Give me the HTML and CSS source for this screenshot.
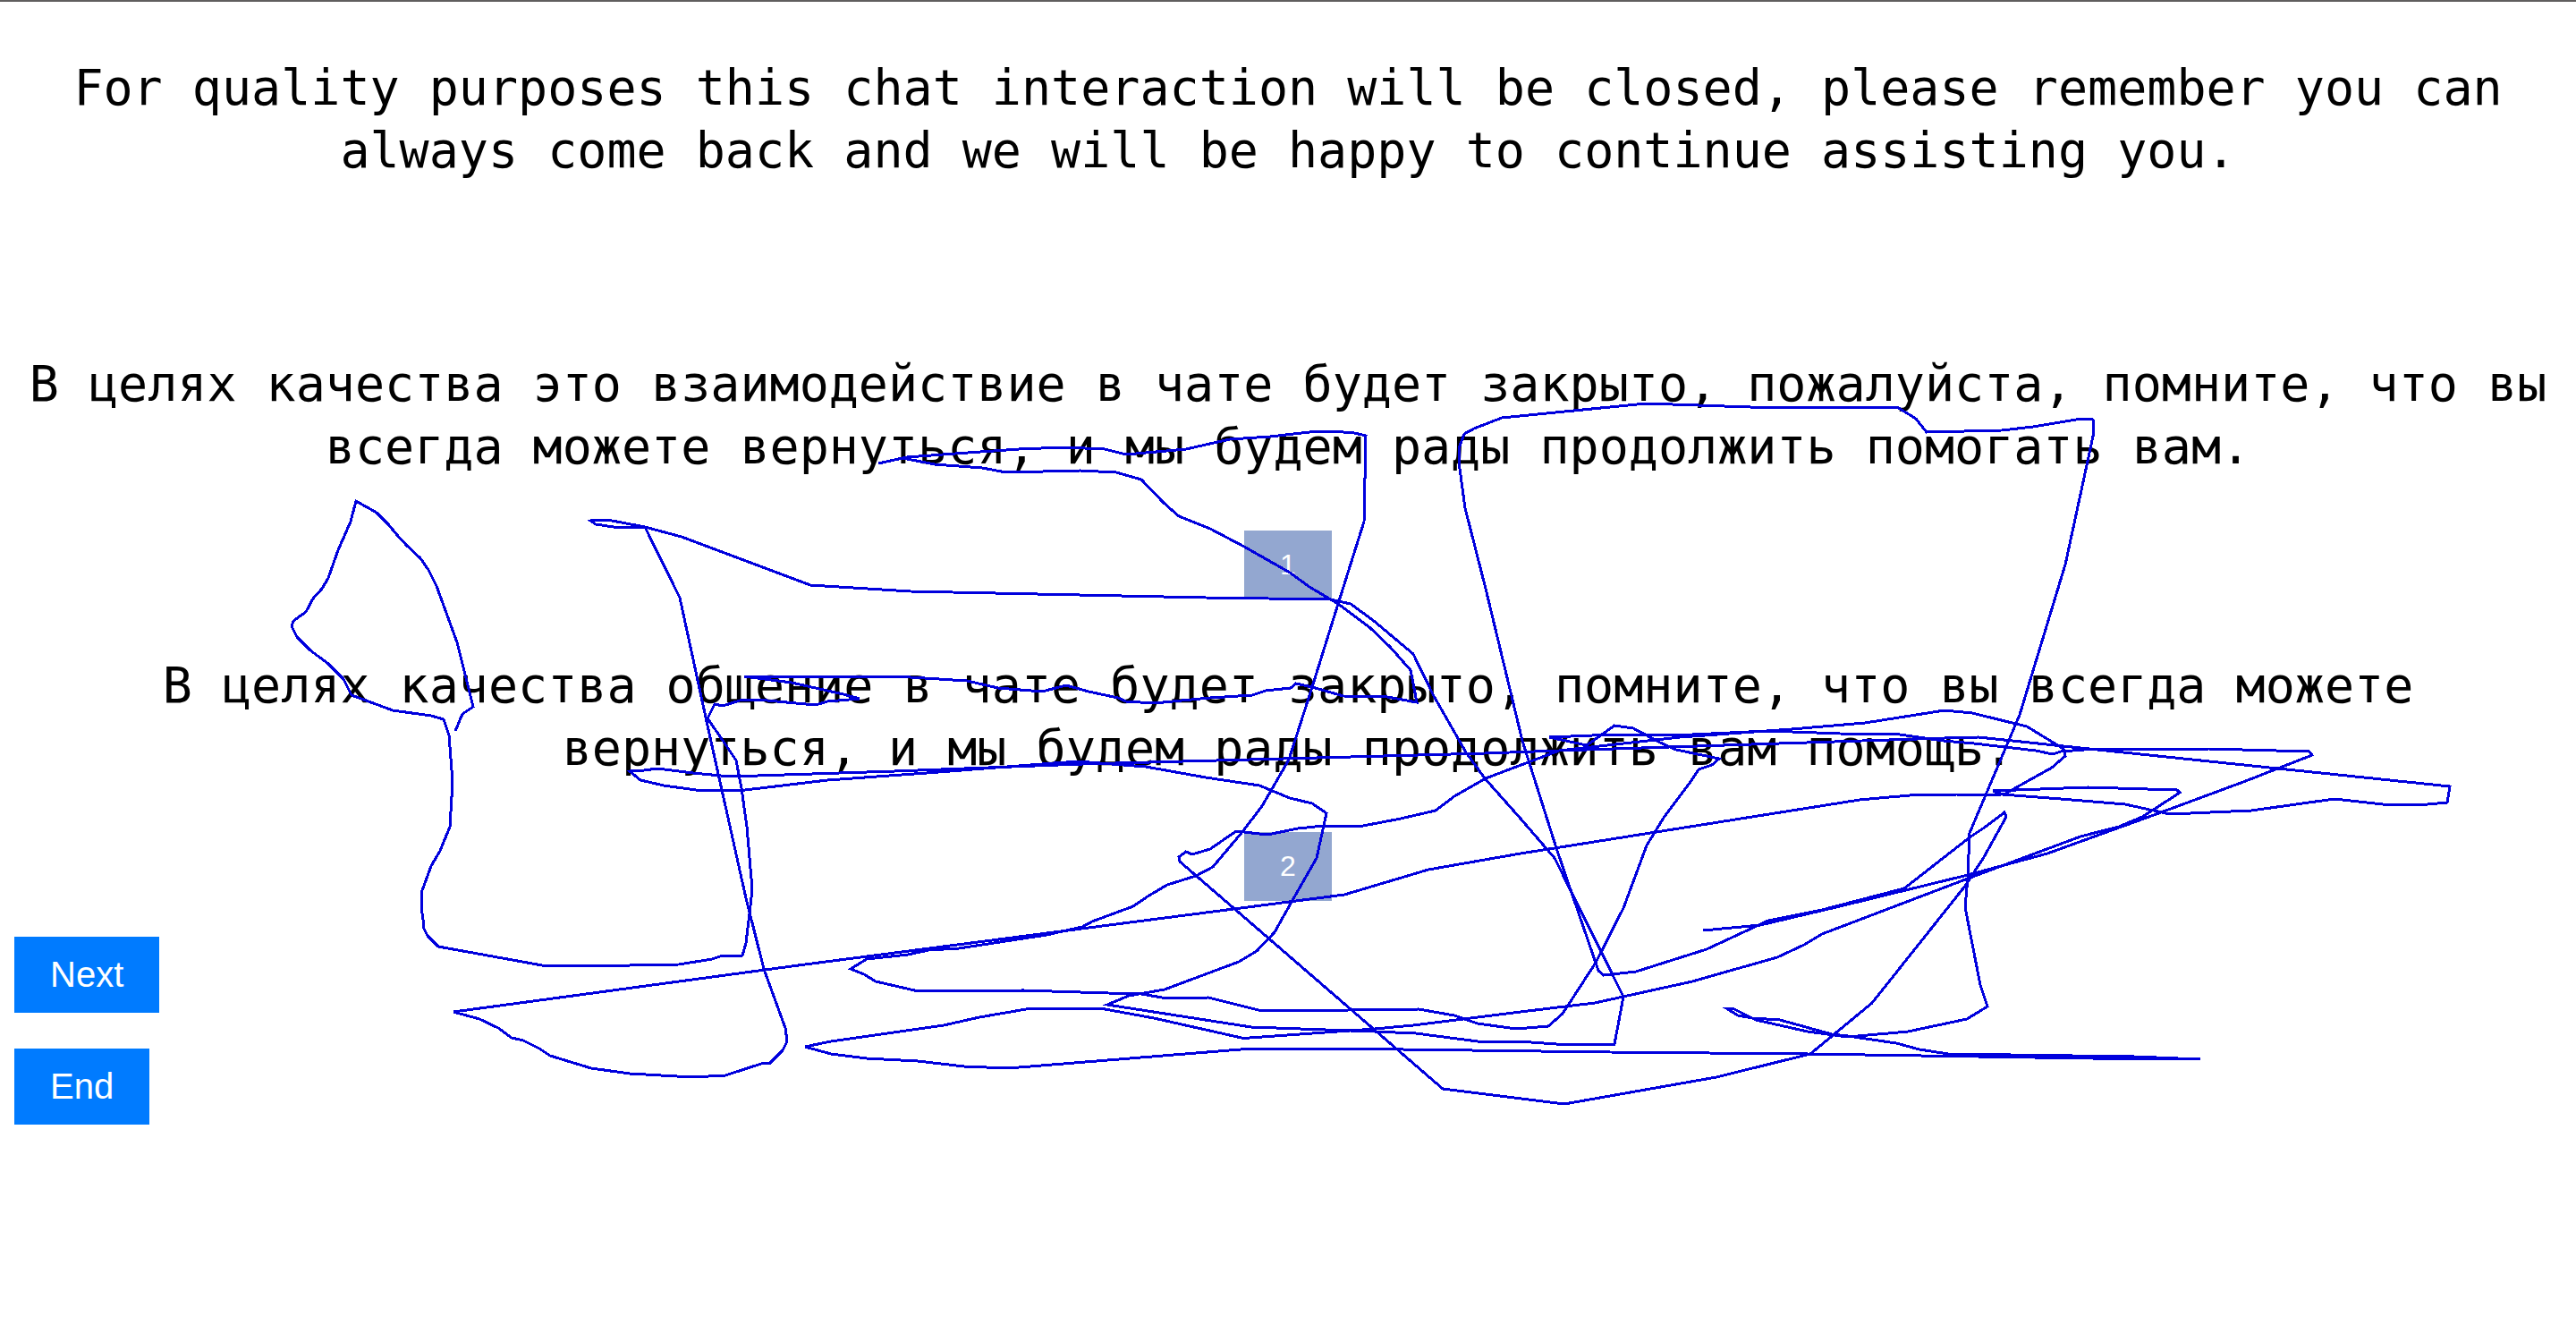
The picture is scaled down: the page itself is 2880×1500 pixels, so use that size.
FILE: index.html
```html
<!DOCTYPE html>
<html lang="ru">
<head>
<meta charset="utf-8">
<title>Chat closing</title>
<link rel="stylesheet" href="styles.css">
</head>
<body>
<main class="page">
  <p class="message message-source">For quality purposes this chat interaction will be closed, please remember you can always come back and we will be happy to continue assisting you.</p>
  <section class="option">
    <p class="message">В целях качества это взаимодействие в чате будет закрыто, пожалуйста, помните, что вы всегда можете вернуться, и мы будем рады продолжить помогать вам.</p>
    <button class="choice" type="button">1</button>
  </section>
  <section class="option">
    <p class="message">В целях качества общение в чате будет закрыто, помните, что вы всегда можете вернуться, и мы будем рады продолжить вам помощь.</p>
    <button class="choice" type="button">2</button>
  </section>
  <div class="actions">
    <button class="action" type="button">Next</button>
    <button class="action" type="button">End</button>
  </div>
  <svg class="trace" viewBox="0 0 2880 1300" aria-hidden="true">
    <polyline points="509,816 517,797 529,789 511,717 488,654 479,636 470,623 454,608 444,597 434,585 421,572 398,559 392,582 378,614 367,645 360,657 350,668 342,683 328,693 326,699 332,711 347,726 367,741 384,758 393,776 412,783 439,793 482,799 496,803 502,821 506,873 503,923 492,950 482,967 471,997 472,1020 473,1027 474,1037 478,1045 490,1057 606,1078 704,1078 759,1077 796,1071 805,1068 830,1067 834,1053 838,1020 841,993 835,923 829,880 823,849 809,828 791,802 799,786 808,788 827,782 847,781 912,787 925,783 961,780 943,775 885,762 832,755 918,755 1018,756 1081,760 1116,768 1165,772 1192,765 1217,772 1250,779 1259,783 1290,785 1353,779 1400,776 1415,771 1443,768 1449,763 1467,767 1502,777 1551,778 1584,784 1580,763 1577,748 1554,722 1531,700 1496,674 1464,655 1442,639 1391,610 1353,590 1318,576 1301,561 1276,535 1248,527 1208,525 1125,527 1098,522 1045,518 1009,511 982,517 1014,510 1054,507 1139,501 1190,499 1235,501 1259,507 1326,501 1375,490 1420,487 1464,482 1490,481 1514,483 1527,486 1525,582 1496,674 1467,767 1441,848 1411,900 1388,930 1356,968 1337,978 1305,988 1283,1001 1267,1012 1221,1029 1210,1035 1170,1044 1072,1059 1038,1061 1015,1066 969,1071 951,1082 966,1088 979,1096 1027,1107 1144,1106 1239,1109 1276,1110 1305,1115 1351,1114 1411,1129 1508,1128 1586,1127 1626,1134 1652,1143 1695,1149 1731,1146 1747,1132 1784,1075 1815,1014 1841,944 1860,913 1890,873 1899,859 1914,854 1922,847 1874,837 1856,829 1826,813 1805,810 1774,832 1732,823 1780,821 1892,820 1977,816 2057,819 2124,820 2173,827 2207,830 2276,838 2295,842 2304,839 2343,836 2469,836 2582,839 2585,843 2508,873 2408,910 2289,953 2200,977 2057,1012 1968,1033 1904,1039"/>
    <polyline points="2460,1183 2386,1180 2178,1177 2146,1172 2120,1165 2066,1157 2048,1155 1990,1139 1959,1137 1943,1134 1930,1126 1937,1126 1963,1139 2021,1152 2066,1158 2133,1152 2199,1138 2222,1124 2214,1100 2197,1013 2200,980 2202,930 2258,798 2309,630 2341,482 2340,468 2327,467 2273,476 2238,480 2154,482 2142,467 2121,454 1957,454 1840,450 1679,466 1648,478 1637,484 1631,500 1632,523 1638,567 1661,657 1702,827 1740,947 1787,1084 1793,1089 1829,1085 1908,1060 1977,1028 2037,1016 2129,992 2202,935 2220,923 2241,907 2243,912 2218,957 2198,988 2093,1120 2024,1177 1919,1203 1749,1233 1613,1216 1319,962 1318,957 1326,951 1333,954 1353,948 1382,928 1417,932 1451,925 1480,922 1524,922 1566,914 1605,905 1626,889 1661,869 1743,838 1878,823 2003,814 2085,807 2174,793 2205,796 2266,811 2307,836 2309,844 2294,857 2242,886 2231,888 2187,887 2146,887 2079,893 1700,953 1597,971 1503,999 900,1077 507,1130 536,1138 557,1148 572,1159 585,1162 603,1171 615,1179 661,1193 704,1199 774,1203 811,1201 854,1187 861,1187 875,1173 880,1163 878,1148 854,1082 834,1003 791,810 760,667 721,588 679,580 660,581 666,585 686,588 721,588 762,599 906,653 1018,660 1348,667 1487,669 1510,674 1536,693 1580,730 1603,777 1639,840 1660,869 1700,914 1738,958 1815,1113 1805,1166 1740,1166 1698,1163 1652,1163 1583,1154 1537,1152 1399,1147 1238,1122 1262,1112 1302,1105 1385,1074 1405,1062 1425,1041 1444,1007 1472,958 1483,908 1467,897 1442,891 1408,877 1348,868 1281,856 1205,850 1152,854 1036,863 925,871 833,882 778,882 742,877 716,871 704,861 720,860 735,858 775,863 816,867 1000,861 1210,853 1660,841 1743,838 2174,824 2212,823 2326,835 2739,878 2736,896 2703,899 2664,898 2610,892 2517,905 2426,909 2376,898 2304,892 2239,887 2228,883 2334,879 2434,882 2437,885 2395,912 2369,923 2326,934 2200,981 2037,1043 2017,1055 1987,1069 1892,1096 1783,1120 1700,1130 1580,1145 1537,1149 1397,1159 1388,1159 1290,1137 1230,1126 1153,1126 1095,1136 1055,1145 929,1163 900,1169 929,1177 969,1182 1026,1185 1078,1191 1127,1193 1399,1171 1491,1171 1800,1175 2021,1177 2338,1182 2460,1183"/>
  </svg>
</main>
</body>
</html>
```
FILE: styles.css
```css
body {
  margin: 0;
  background: #fff;
  color: #000;
}

.page {
  position: relative;
  border-top: 2px solid #605e5e;
  padding: 61px 16px 40px;
}

.message {
  margin: 0;
  font-family: "DejaVu Sans Mono", monospace;
  font-size: 55px;
  line-height: 70px;
  text-align: center;
}

.message-source {
  margin-bottom: 191px;
}

.option {
  display: flex;
  flex-direction: column;
  align-items: center;
  gap: 59px;
}

.option + .option {
  margin-top: 61px;
}

.choice,
.action {
  border: 0;
  color: #fff;
  font-family: "Liberation Sans", Arial, sans-serif;
}

.choice {
  padding: 20px 40px;
  background: #93a7d0;
  font-size: 32px;
  line-height: 37px;
}

.action {
  padding: 20px 40px;
  background: #007bff;
  font-size: 40px;
  line-height: 45px;
}

.actions {
  display: flex;
  flex-direction: column;
  align-items: flex-start;
  gap: 40px;
  margin-top: 40px;
}

/* Pen strokes drawn over the whole page */
.trace {
  position: absolute;
  top: -1px;
  left: 0;
  width: 100%;
  pointer-events: none;
}

.trace polyline {
  fill: none;
  stroke: #00d;
  stroke-width: 3;
  shape-rendering: crispEdges;
}
```
